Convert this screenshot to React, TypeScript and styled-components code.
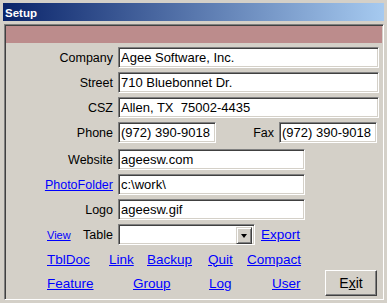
import React from 'react';
import styled, {createGlobalStyle} from 'styled-components';

const Global = createGlobalStyle`
  html, body {
    margin: 0;
    padding: 0;
    background: #d4d0c8;
  }
  * { box-sizing: border-box; }
`;

const Window = styled.div`
  width: 387px;
  height: 303px;
  padding: 3px 3px 3px 3px;
  background: #d4d0c8;
  display: flex;
  flex-direction: column;
  font-family: 'Liberation Sans', Arial, sans-serif;
  color: #000;
`;

const TitleBar = styled.div`
  height: 18px;
  flex: none;
  margin-bottom: 3px;
  padding: 1px 0 0 2px;
  background: linear-gradient(to right, #0a246a, #a6caf0);
  color: #fff;
  font-weight: bold;
  font-size: 11.5px;
  line-height: 18px;
`;

const Client = styled.div`
  flex: 1;
  margin-left: 1px;
  border-style: solid;
  border-width: 1px;
  border-color: #808080 #fff #fff #808080;
  box-shadow: inset 1px 1px #404040, inset -1px -1px #d4d0c8;
  padding: 1px;
  display: flex;
  flex-direction: column;
`;

const Banner = styled.div`
  height: 17px;
  flex: none;
  background: #bc8c8c;
`;

const Form = styled.div`
  display: flex;
  flex-direction: column;
  gap: 4px;
  padding-top: 4px;
`;

const Row = styled.div<{extra?: number}>`
  display: flex;
  align-items: center;
  height: 21px;
  margin-top: ${(p) => p.extra ?? 0}px;
`;

const Label = styled.div<{w?: number}>`
  width: ${(p) => p.w ?? 107}px;
  flex: none;
  margin-right: 5px;
  text-align: right;
  font-size: 12.5px;
`;

const LabelPair = styled.div`
  width: 107px;
  flex: none;
  margin-right: 5px;
  padding-left: 41px;
  display: flex;
  justify-content: space-between;
  align-items: baseline;
  font-size: 12.5px;
`;

const Box = styled.input<{w: number}>`
  width: ${(p) => p.w}px;
  height: 21px;
  flex: none;
  margin: 0;
  padding: 0 0 0 2px;
  border-style: solid;
  border-width: 1px;
  border-color: #808080 #fff #fff #808080;
  box-shadow: inset 1px 1px #404040, inset -1px -1px #d4d0c8;
  background: #fff;
  font-family: 'Liberation Sans', Arial, sans-serif;
  font-size: 13px;
  color: #000;
  outline: none;
`;

const Combo = styled.div`
  width: 137px;
  height: 21px;
  flex: none;
  border-style: solid;
  border-width: 1px;
  border-color: #808080 #fff #fff #808080;
  box-shadow: inset 1px 1px #404040, inset -1px -1px #d4d0c8;
  background: #fff;
  padding: 2px;
  display: flex;
  justify-content: flex-end;
`;

const DropButton = styled.div`
  width: 16px;
  height: 17px;
  background: #d4d0c8;
  border-style: solid;
  border-width: 1px;
  border-color: #d4d0c8 #404040 #404040 #d4d0c8;
  box-shadow: inset 1px 1px #fff, inset -1px -1px #808080;
  display: flex;
  align-items: center;
  justify-content: center;
`;

const Arrow = styled.div`
  width: 0;
  height: 0;
  border-left: 3.5px solid transparent;
  border-right: 3.5px solid transparent;
  border-top: 4px solid #000;
`;

const Link = styled.a<{size?: number}>`
  color: #0000ff;
  text-decoration: underline;
  font-size: ${(p) => p.size ?? 13.5}px;
  cursor: pointer;
`;

const Export = styled(Link)`
  margin-left: 6px;
`;

const LinkRow = styled.div<{top: number; h: number}>`
  display: flex;
  align-items: center;
  height: ${(p) => p.h}px;
  margin-top: ${(p) => p.top}px;
  padding-left: 41px;
`;

const Slot = styled.div<{w: number}>`
  width: ${(p) => p.w}px;
  flex: none;
  line-height: 18px;
`;

const Button = styled.button`
  width: 52px;
  height: 26px;
  margin: 0;
  padding: 0;
  background: #d4d0c8;
  border-style: solid;
  border-width: 1px;
  border-color: #fff #404040 #404040 #fff;
  box-shadow: inset -1px -1px #808080;
  font-family: 'Liberation Sans', Arial, sans-serif;
  font-size: 14px;
  color: #000;
`;

export default function App() {
  return (
    <>
      <Global />
      <Window>
        <TitleBar>Setup</TitleBar>
        <Client>
          <Banner />
          <Form>
            <Row>
              <Label>Company</Label>
              <Box w={261} readOnly value="Agee Software, Inc." />
            </Row>
            <Row>
              <Label>Street</Label>
              <Box w={261} readOnly value="710 Bluebonnet Dr." />
            </Row>
            <Row>
              <Label>CSZ</Label>
              <Box w={261} readOnly value="Allen, TX  75002-4435" />
            </Row>
            <Row>
              <Label>Phone</Label>
              <Box w={98} readOnly value="(972) 390-9018" />
              <Label w={58}>Fax</Label>
              <Box w={98} readOnly value="(972) 390-9018" />
            </Row>
            <Row extra={2}>
              <Label>Website</Label>
              <Box w={187} readOnly value="ageesw.com" />
            </Row>
            <Row>
              <Label>
                <Link size={12.5}>PhotoFolder</Link>
              </Label>
              <Box w={187} readOnly value="c:\work\" />
            </Row>
            <Row>
              <Label>Logo</Label>
              <Box w={187} readOnly value="ageesw.gif" />
            </Row>
            <Row>
              <LabelPair>
                <Link size={11}>View</Link>
                <span>Table</span>
              </LabelPair>
              <Combo>
                <DropButton>
                  <Arrow />
                </DropButton>
              </Combo>
              <Export>Export</Export>
            </Row>
          </Form>
          <LinkRow top={5} h={18}>
            <Slot w={62}><Link>TblDoc</Link></Slot>
            <Slot w={38}><Link>Link</Link></Slot>
            <Slot w={61}><Link>Backup</Link></Slot>
            <Slot w={39}><Link>Quit</Link></Slot>
            <Slot w={60}><Link>Compact</Link></Slot>
          </LinkRow>
          <LinkRow top={2} h={26}>
            <Slot w={86}><Link>Feature</Link></Slot>
            <Slot w={76}><Link>Group</Link></Slot>
            <Slot w={63}><Link>Log</Link></Slot>
            <Slot w={53}><Link>User</Link></Slot>
            <Button>
              E<u>x</u>it
            </Button>
          </LinkRow>
        </Client>
      </Window>
    </>
  );
}
